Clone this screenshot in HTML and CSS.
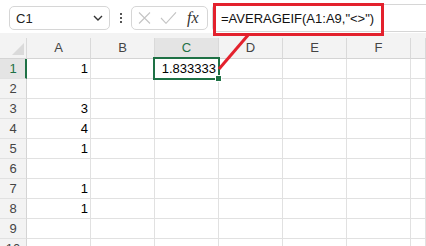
FILE: index.html
```html
<!DOCTYPE html>
<html lang="en">
<head>
    <meta charset="UTF-8">
    <title>AVERAGEIF</title>
    <link rel="stylesheet" href="styles.css">
</head>
<body>

    <div class="app">
        <div class="toolbar">
            <div class="namebox">
                <span>C1</span>
                <svg class="chevron" width="10" height="6" viewBox="0 0 10 6"><path d="M1 1l4 4 4-4" fill="none" stroke="#333" stroke-width="1.4"/></svg>
            </div>
            <div class="dots"><i></i><i></i><i></i></div>
            <div class="buttons">
                <svg width="13" height="12" viewBox="0 0 13 12"><path d="M1 0.5l11 11M12 0.5l-11 11" stroke="#c4c4c4" stroke-width="1.1"/></svg>
                <svg width="17" height="12" viewBox="0 0 17 12"><path d="M1 6l5 5.3 10-11" fill="none" stroke="#c4c4c4" stroke-width="1.1"/></svg>
                <span class="fx">fx</span>
            </div>
            <div class="formula">=AVERAGEIF(A1:A9,"&lt;&gt;")</div>
        </div>

        <div class="band"></div>

        <div class="sheet">
            <div class="row head">
                <div class="corner"></div>
                <div class="col">A</div>
                <div class="col">B</div>
                <div class="col sel">C</div>
                <div class="col">D</div>
                <div class="col">E</div>
                <div class="col">F</div>
                <div class="col"></div>
            </div>
            <div class="row">
                <div class="rh sel">1</div>
                <div class="cell">1</div>
                <div class="cell"></div>
                <div class="cell active">1.833333<span class="handle"></span></div>
                <div class="cell"></div>
                <div class="cell"></div>
                <div class="cell"></div>
                <div class="cell"></div>
            </div>
            <div class="row">
                <div class="rh">2</div>
                <div class="cell"></div>
                <div class="cell"></div>
                <div class="cell"></div>
                <div class="cell"></div>
                <div class="cell"></div>
                <div class="cell"></div>
                <div class="cell"></div>
            </div>
            <div class="row">
                <div class="rh">3</div>
                <div class="cell">3</div>
                <div class="cell"></div>
                <div class="cell"></div>
                <div class="cell"></div>
                <div class="cell"></div>
                <div class="cell"></div>
                <div class="cell"></div>
            </div>
            <div class="row">
                <div class="rh">4</div>
                <div class="cell">4</div>
                <div class="cell"></div>
                <div class="cell"></div>
                <div class="cell"></div>
                <div class="cell"></div>
                <div class="cell"></div>
                <div class="cell"></div>
            </div>
            <div class="row">
                <div class="rh">5</div>
                <div class="cell">1</div>
                <div class="cell"></div>
                <div class="cell"></div>
                <div class="cell"></div>
                <div class="cell"></div>
                <div class="cell"></div>
                <div class="cell"></div>
            </div>
            <div class="row">
                <div class="rh">6</div>
                <div class="cell"></div>
                <div class="cell"></div>
                <div class="cell"></div>
                <div class="cell"></div>
                <div class="cell"></div>
                <div class="cell"></div>
                <div class="cell"></div>
            </div>
            <div class="row">
                <div class="rh">7</div>
                <div class="cell">1</div>
                <div class="cell"></div>
                <div class="cell"></div>
                <div class="cell"></div>
                <div class="cell"></div>
                <div class="cell"></div>
                <div class="cell"></div>
            </div>
            <div class="row">
                <div class="rh">8</div>
                <div class="cell">1</div>
                <div class="cell"></div>
                <div class="cell"></div>
                <div class="cell"></div>
                <div class="cell"></div>
                <div class="cell"></div>
                <div class="cell"></div>
            </div>
            <div class="row">
                <div class="rh">9</div>
                <div class="cell"></div>
                <div class="cell"></div>
                <div class="cell"></div>
                <div class="cell"></div>
                <div class="cell"></div>
                <div class="cell"></div>
                <div class="cell"></div>
            </div>
            <div class="row">
                <div class="rh">10</div>
                <div class="cell"></div>
                <div class="cell"></div>
                <div class="cell"></div>
                <div class="cell"></div>
                <div class="cell"></div>
                <div class="cell"></div>
                <div class="cell"></div>
            </div>
        </div>

        <!-- Callout: box round the formula and a line to the cell -->
        <div class="callout"></div>
        <svg class="pointer" width="426" height="246" viewBox="0 0 426 246">
            <line x1="219" y1="69" x2="249" y2="34" stroke="#e3212d" stroke-width="3"/>
        </svg>
    </div>

</body>
</html>
```

FILE: styles.css
```css
body {
    margin: 0;
    font-family: 'Liberation Sans', Arial, sans-serif;
    font-size: 13px;
    color: #000;
    background-color: #ffffff;
}

.app {
    position: relative;
    width: 426px;
    height: 246px;
    overflow: hidden;
}

/* Name box / formula bar */
.toolbar {
    display: flex;
    align-items: flex-start;
    height: 33px;
    padding: 6px 0 0 9px;
    box-sizing: border-box;
    background-color: #ffffff;
}

.namebox {
    display: flex;
    align-items: center;
    justify-content: space-between;
    width: 101px;
    height: 24px;
    padding: 0 6px 0 6px;
    box-sizing: border-box;
    border: 1px solid #d6d6d6;
    border-radius: 5px;
    color: #222;
}

.dots {
    display: flex;
    flex-direction: column;
    gap: 2px;
    margin: 7px 9px 0 10px;
}

.dots i {
    display: block;
    width: 2px;
    height: 2px;
    background-color: #555;
}

.buttons {
    display: flex;
    align-items: center;
    width: 77px;
    height: 24px;
    padding-left: 6px;
    box-sizing: border-box;
    border: 1px solid #d6d6d6;
    border-radius: 5px;
    gap: 9px;
}

.buttons .fx {
    font-family: 'Liberation Serif', 'Times New Roman', serif;
    font-style: italic;
    font-size: 16px;
    color: #333;
    margin-left: 1px;
}

.formula {
    flex-grow: 1;
    height: 28px;
    margin: -2px 0 0 4px;
    padding-left: 8px;
    line-height: 28px;
    box-sizing: border-box;
    border: 1px solid #d6d6d6;
    border-right: none;
    border-radius: 5px 0 0 5px;
    font-size: 13px;
    color: #111;
}

.band {
    height: 5px;
    background-color: #f3f3f3;
}

/* Grid */
.row {
    display: grid;
    grid-template-columns: 27px repeat(6, 64px) 1fr;
    height: 20px;
}

.row.head {
    height: 21px;
    background-color: #f3f3f3;
}

.row > div {
    box-sizing: border-box;
    border-right: 1px solid #e1e1e1;
    border-bottom: 1px solid #e1e1e1;
    line-height: 19px;
}

.row.head > div {
    border-right-color: #d9d9d9;
    border-bottom-color: #d4d4d4;
    line-height: 20px;
    text-align: center;
    color: #444;
}

.corner {
    position: relative;
}

.corner::after {
    content: '';
    position: absolute;
    right: 2px;
    bottom: 3px;
    width: 12px;
    height: 12px;
    background-color: #dadada;
    clip-path: polygon(100% 0, 100% 100%, 0 100%);
}

.rh {
    background-color: #f3f3f3;
    text-align: center;
    color: #444;
}

.row .rh {
    border-right-color: #d4d4d4;
}

.row.head .col.sel {
    background-color: #e4e4e4;
    color: #1e7145;
    border-bottom: 2px solid #1e7145;
    line-height: 19px;
}

.row .rh.sel {
    background-color: #e4e4e4;
    color: #1e7145;
    border-right: 2px solid #1e7145;
    padding-left: 1px;
}

.cell {
    text-align: right;
    padding-right: 2px;
}

.cell.active {
    position: relative;
}

.cell.active::before {
    content: '';
    position: absolute;
    left: -2px;
    top: -2px;
    right: -2px;
    bottom: -2px;
    border: 2px solid #1e7145;
}

.handle {
    position: absolute;
    right: -4px;
    bottom: -4px;
    width: 5px;
    height: 5px;
    background-color: #1e7145;
    border: 1px solid #ffffff;
}

/* Annotation */
.callout {
    position: absolute;
    left: 213px;
    top: 3px;
    width: 171px;
    height: 33px;
    box-sizing: border-box;
    border: 3px solid #e3212d;
}

.pointer {
    position: absolute;
    left: 0;
    top: 0;
    pointer-events: none;
}
```
